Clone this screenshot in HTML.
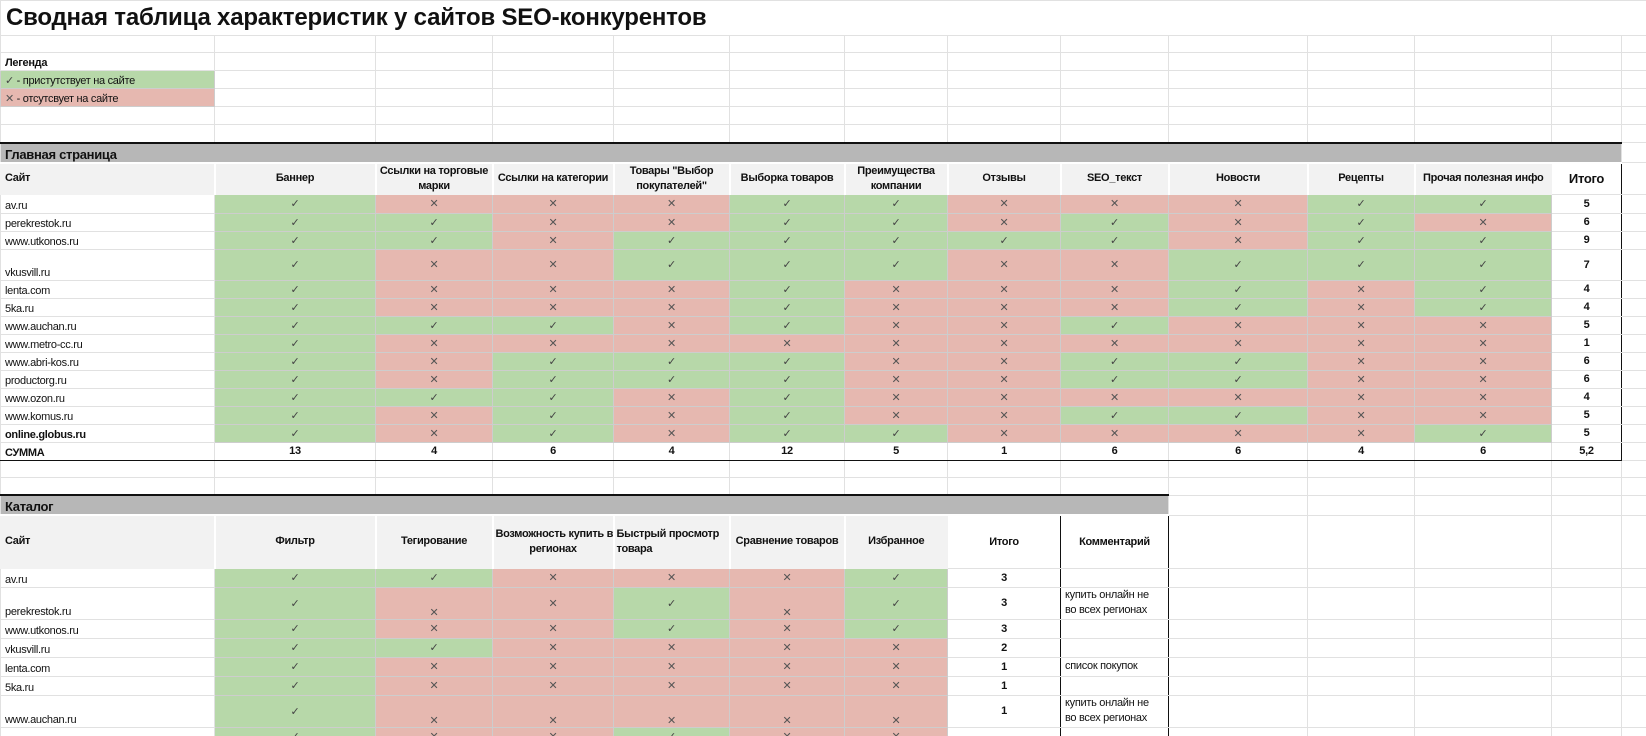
<!DOCTYPE html>
<html><head><meta charset="utf-8"><style>
html,body{margin:0;padding:0;background:#fff;width:1646px;height:736px;overflow:hidden}
table{border-collapse:collapse;table-layout:fixed;font-family:"Liberation Sans","DejaVu Sans",sans-serif;font-size:11px;color:#111}
td{border:1px solid #e1e1e1;padding:0 4px;white-space:nowrap;overflow:hidden;text-align:center;vertical-align:middle;box-sizing:border-box;letter-spacing:-0.3px}
td.s{text-align:left;vertical-align:bottom;padding-bottom:1px}
.g{background:#b7d8a9;border-color:#cdcdcd;color:#444}
.r{background:#e6b8b0;border-color:#cdcdcd;color:#555}
.bar td.b{background:#b7b7b7;border-top:2px solid #111;border-bottom:2px solid #fff;text-align:left;font-weight:bold;font-size:13px;vertical-align:bottom}
.hd td.h{background:#f2f2f2;border:1px solid #f2f2f2;border-left:2px solid #fff;font-weight:bold;line-height:15px;padding:0 2px}
.it{font-weight:bold;border-left:1px solid #111 !important;border-right:1px solid #111 !important;background:#fff}
.sum td{border-top:1px solid #111;border-bottom:1px solid #111;font-weight:bold}
.c{text-align:left;line-height:15px}
</style></head><body>
<table style="width:1646px">
<colgroup><col style="width:214px"><col style="width:161px"><col style="width:117px"><col style="width:121px"><col style="width:116px"><col style="width:115px"><col style="width:103px"><col style="width:113px"><col style="width:108px"><col style="width:139px"><col style="width:107px"><col style="width:137px"><col style="width:70px"><col style="width:25px"></colgroup>
<tr style="height:35px"><td colspan="14" style="text-align:left;font-size:24px;font-weight:bold;padding-left:5px;border-color:#e1e1e1;letter-spacing:-0.2px">Сводная таблица характеристик у сайтов SEO-конкурентов</td></tr>
<tr style="height:17px"><td></td><td></td><td></td><td></td><td></td><td></td><td></td><td></td><td></td><td></td><td></td><td></td><td></td><td></td></tr>
<tr style="height:18px"><td class="s" style="font-weight:bold">Легенда</td><td></td><td></td><td></td><td></td><td></td><td></td><td></td><td></td><td></td><td></td><td></td><td></td><td></td></tr>
<tr style="height:18px"><td class="s g" style="color:#111"><span style="color:#444">✓</span> - пристутствует на сайте</td><td></td><td></td><td></td><td></td><td></td><td></td><td></td><td></td><td></td><td></td><td></td><td></td><td></td></tr>
<tr style="height:18px"><td class="s r" style="color:#111"><span style="color:#555">✕</span> - отсутсвует на сайте</td><td></td><td></td><td></td><td></td><td></td><td></td><td></td><td></td><td></td><td></td><td></td><td></td><td></td></tr>
<tr style="height:18px"><td></td><td></td><td></td><td></td><td></td><td></td><td></td><td></td><td></td><td></td><td></td><td></td><td></td><td></td></tr>
<tr style="height:18px"><td></td><td></td><td></td><td></td><td></td><td></td><td></td><td></td><td></td><td></td><td></td><td></td><td></td><td></td></tr>
<tr class="bar" style="height:20px"><td class="b" colspan="13">Главная страница</td><td></td></tr>
<tr class="hd" style="height:30px"><td class="h" style="text-align:left;border-left:1px solid #f2f2f2;padding-left:4px">Сайт</td><td class="h">Баннер</td><td class="h">Ссылки на торговые<br>марки</td><td class="h">Ссылки на категории</td><td class="h">Товары "Выбор<br>покупателей"</td><td class="h">Выборка товаров</td><td class="h">Преимущества<br>компании</td><td class="h">Отзывы</td><td class="h">SEO_текст</td><td class="h">Новости</td><td class="h">Рецепты</td><td class="h">Прочая полезная инфо</td><td class="it" style="font-size:13px;border-top:1px solid #111">Итого</td><td></td></tr>
<tr style="height:19px"><td class="s">av.ru</td><td class="g">✓</td><td class="r">✕</td><td class="r">✕</td><td class="r">✕</td><td class="g">✓</td><td class="g">✓</td><td class="r">✕</td><td class="r">✕</td><td class="r">✕</td><td class="g">✓</td><td class="g">✓</td><td class="it">5</td><td></td></tr>
<tr style="height:18px"><td class="s">perekrestok.ru</td><td class="g">✓</td><td class="g">✓</td><td class="r">✕</td><td class="r">✕</td><td class="g">✓</td><td class="g">✓</td><td class="r">✕</td><td class="g">✓</td><td class="r">✕</td><td class="g">✓</td><td class="r">✕</td><td class="it">6</td><td></td></tr>
<tr style="height:18px"><td class="s">www.utkonos.ru</td><td class="g">✓</td><td class="g">✓</td><td class="r">✕</td><td class="g">✓</td><td class="g">✓</td><td class="g">✓</td><td class="g">✓</td><td class="g">✓</td><td class="r">✕</td><td class="g">✓</td><td class="g">✓</td><td class="it">9</td><td></td></tr>
<tr style="height:31px"><td class="s">vkusvill.ru</td><td class="g">✓</td><td class="r">✕</td><td class="r">✕</td><td class="g">✓</td><td class="g">✓</td><td class="g">✓</td><td class="r">✕</td><td class="r">✕</td><td class="g">✓</td><td class="g">✓</td><td class="g">✓</td><td class="it">7</td><td></td></tr>
<tr style="height:18px"><td class="s">lenta.com</td><td class="g">✓</td><td class="r">✕</td><td class="r">✕</td><td class="r">✕</td><td class="g">✓</td><td class="r">✕</td><td class="r">✕</td><td class="r">✕</td><td class="g">✓</td><td class="r">✕</td><td class="g">✓</td><td class="it">4</td><td></td></tr>
<tr style="height:18px"><td class="s">5ka.ru</td><td class="g">✓</td><td class="r">✕</td><td class="r">✕</td><td class="r">✕</td><td class="g">✓</td><td class="r">✕</td><td class="r">✕</td><td class="r">✕</td><td class="g">✓</td><td class="r">✕</td><td class="g">✓</td><td class="it">4</td><td></td></tr>
<tr style="height:18px"><td class="s">www.auchan.ru</td><td class="g">✓</td><td class="g">✓</td><td class="g">✓</td><td class="r">✕</td><td class="g">✓</td><td class="r">✕</td><td class="r">✕</td><td class="g">✓</td><td class="r">✕</td><td class="r">✕</td><td class="r">✕</td><td class="it">5</td><td></td></tr>
<tr style="height:18px"><td class="s">www.metro-cc.ru</td><td class="g">✓</td><td class="r">✕</td><td class="r">✕</td><td class="r">✕</td><td class="r">✕</td><td class="r">✕</td><td class="r">✕</td><td class="r">✕</td><td class="r">✕</td><td class="r">✕</td><td class="r">✕</td><td class="it">1</td><td></td></tr>
<tr style="height:18px"><td class="s">www.abri-kos.ru</td><td class="g">✓</td><td class="r">✕</td><td class="g">✓</td><td class="g">✓</td><td class="g">✓</td><td class="r">✕</td><td class="r">✕</td><td class="g">✓</td><td class="g">✓</td><td class="r">✕</td><td class="r">✕</td><td class="it">6</td><td></td></tr>
<tr style="height:18px"><td class="s">productorg.ru</td><td class="g">✓</td><td class="r">✕</td><td class="g">✓</td><td class="g">✓</td><td class="g">✓</td><td class="r">✕</td><td class="r">✕</td><td class="g">✓</td><td class="g">✓</td><td class="r">✕</td><td class="r">✕</td><td class="it">6</td><td></td></tr>
<tr style="height:18px"><td class="s">www.ozon.ru</td><td class="g">✓</td><td class="g">✓</td><td class="g">✓</td><td class="r">✕</td><td class="g">✓</td><td class="r">✕</td><td class="r">✕</td><td class="r">✕</td><td class="r">✕</td><td class="r">✕</td><td class="r">✕</td><td class="it">4</td><td></td></tr>
<tr style="height:18px"><td class="s">www.komus.ru</td><td class="g">✓</td><td class="r">✕</td><td class="g">✓</td><td class="r">✕</td><td class="g">✓</td><td class="r">✕</td><td class="r">✕</td><td class="g">✓</td><td class="g">✓</td><td class="r">✕</td><td class="r">✕</td><td class="it">5</td><td></td></tr>
<tr style="height:18px"><td class="s" style="font-weight:bold">online.globus.ru</td><td class="g">✓</td><td class="r">✕</td><td class="g">✓</td><td class="r">✕</td><td class="g">✓</td><td class="g">✓</td><td class="r">✕</td><td class="r">✕</td><td class="r">✕</td><td class="r">✕</td><td class="g">✓</td><td class="it">5</td><td></td></tr>
<tr class="sum" style="height:18px"><td class="s">СУММА</td><td>13</td><td>4</td><td>6</td><td>4</td><td>12</td><td>5</td><td>1</td><td>6</td><td>6</td><td>4</td><td>6</td><td class="it">5,2</td><td style="border-top:1px solid #e1e1e1;border-bottom:1px solid #e1e1e1"></td></tr>
<tr style="height:17px"><td></td><td></td><td></td><td></td><td></td><td></td><td></td><td></td><td></td><td></td><td></td><td></td><td></td><td></td></tr>
<tr style="height:18px"><td></td><td></td><td></td><td></td><td></td><td></td><td></td><td></td><td></td><td></td><td></td><td></td><td></td><td></td></tr>
<tr class="bar" style="height:20px"><td class="b" colspan="9">Каталог</td><td></td><td></td><td></td><td></td><td></td></tr>
<tr class="hd" style="height:53px"><td class="h" style="text-align:left;border-left:1px solid #f2f2f2;padding-left:4px">Сайт</td><td class="h">Фильтр</td><td class="h">Тегирование</td><td class="h">Возможность купить в<br>регионах</td><td class="h" style="text-align:left">Быстрый просмотр<br>товара</td><td class="h">Сравнение товаров</td><td class="h">Избранное</td><td class="it" style="border-top:1px solid #111">Итого</td><td class="it">Комментарий</td><td></td><td></td><td></td><td></td><td></td></tr>
<tr style="height:19px"><td class="s">av.ru</td><td class="g">✓</td><td class="g">✓</td><td class="r">✕</td><td class="r">✕</td><td class="r">✕</td><td class="g">✓</td><td class="it">3</td><td class="it c"></td><td></td><td></td><td></td><td></td><td></td></tr>
<tr style="height:32px"><td class="s">perekrestok.ru</td><td class="g">✓</td><td class="r" style="vertical-align:bottom">✕</td><td class="r">✕</td><td class="g">✓</td><td class="r" style="vertical-align:bottom">✕</td><td class="g">✓</td><td class="it">3</td><td class="it c" style="font-weight:normal">купить онлайн не<br>во всех регионах</td><td></td><td></td><td></td><td></td><td></td></tr>
<tr style="height:19px"><td class="s">www.utkonos.ru</td><td class="g">✓</td><td class="r">✕</td><td class="r">✕</td><td class="g">✓</td><td class="r">✕</td><td class="g">✓</td><td class="it">3</td><td class="it c"></td><td></td><td></td><td></td><td></td><td></td></tr>
<tr style="height:19px"><td class="s">vkusvill.ru</td><td class="g">✓</td><td class="g">✓</td><td class="r">✕</td><td class="r">✕</td><td class="r">✕</td><td class="r">✕</td><td class="it">2</td><td class="it c"></td><td></td><td></td><td></td><td></td><td></td></tr>
<tr style="height:19px"><td class="s">lenta.com</td><td class="g">✓</td><td class="r">✕</td><td class="r">✕</td><td class="r">✕</td><td class="r">✕</td><td class="r">✕</td><td class="it">1</td><td class="it c" style="font-weight:normal">список покупок</td><td></td><td></td><td></td><td></td><td></td></tr>
<tr style="height:19px"><td class="s">5ka.ru</td><td class="g">✓</td><td class="r">✕</td><td class="r">✕</td><td class="r">✕</td><td class="r">✕</td><td class="r">✕</td><td class="it">1</td><td class="it c"></td><td></td><td></td><td></td><td></td><td></td></tr>
<tr style="height:32px"><td class="s">www.auchan.ru</td><td class="g">✓</td><td class="r" style="vertical-align:bottom">✕</td><td class="r" style="vertical-align:bottom">✕</td><td class="r" style="vertical-align:bottom">✕</td><td class="r" style="vertical-align:bottom">✕</td><td class="r" style="vertical-align:bottom">✕</td><td class="it">1</td><td class="it c" style="font-weight:normal">купить онлайн не<br>во всех регионах</td><td></td><td></td><td></td><td></td><td></td></tr>
<tr style="height:19px"><td class="s"></td><td class="g">✓</td><td class="r">✕</td><td class="r">✕</td><td class="g">✓</td><td class="r">✕</td><td class="r">✕</td><td class="it"></td><td class="it c"></td><td></td><td></td><td></td><td></td><td></td></tr>
</table>
</body></html>
